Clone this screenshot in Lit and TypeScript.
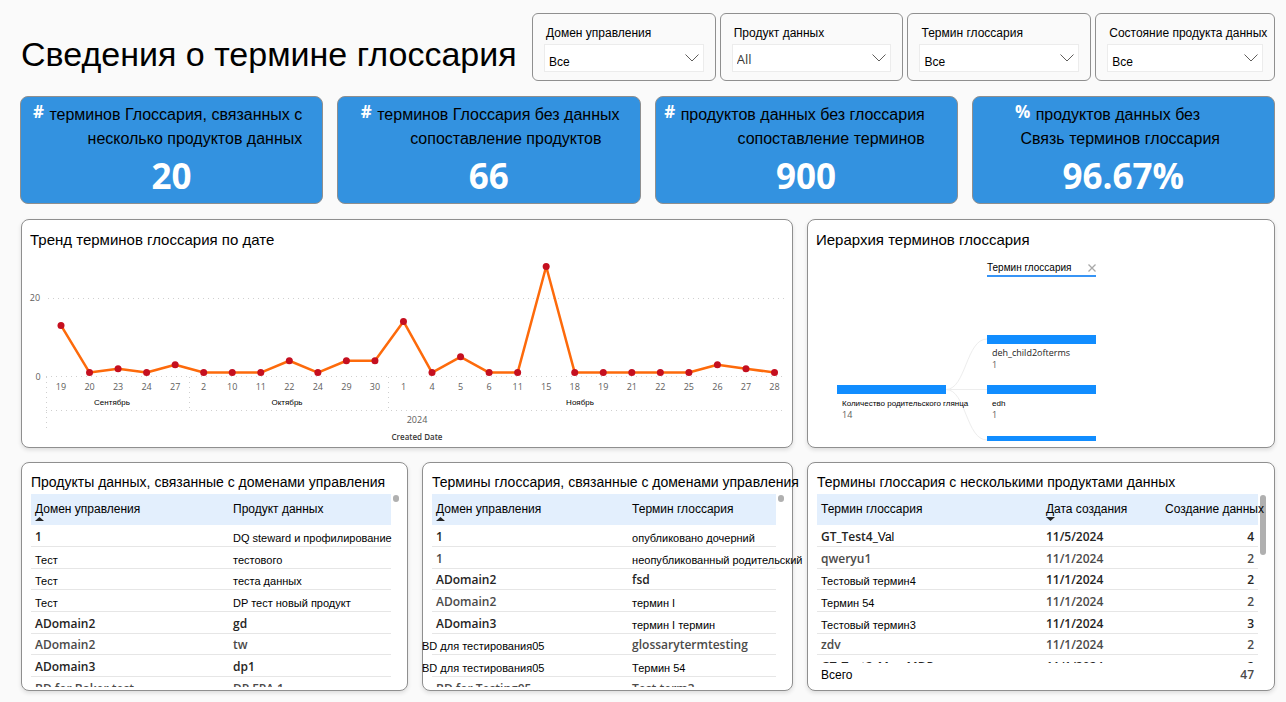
import { LitElement, html, svg, css, nothing } from "lit";
import { customElement, property } from "lit/decorators.js";
import { classMap } from "lit/directives/class-map.js";

interface Cell {
  text: string;
  ui?: boolean;
  soft?: boolean;
  bleed?: boolean;
  tail?: string;
}
interface Column {
  label: string;
  width: number;
  sort?: "asc" | "desc";
  end?: boolean;
}

const plain = (text: string): Cell => ({ text });
const strong = (text: string): Cell => ({ text, ui: true });
const soft = (text: string): Cell => ({ text, ui: true, soft: true });

const FILTERS = [
  { id: "domain", label: "Домен управления", value: "Все", latin: false },
  { id: "product", label: "Продукт данных", value: "All", latin: true },
  { id: "term", label: "Термин глоссария", value: "Все", latin: false },
  { id: "status", label: "Состояние продукта данных", value: "Все", latin: false },
];

const KPIS = [
  { sign: "#", lines: ["терминов Глоссария, связанных с", "несколько продуктов данных"], inset: ["s", "s"], value: "20" },
  { sign: "#", lines: ["терминов Глоссария без данных", "сопоставление продуктов"], inset: ["s", "l"], value: "66" },
  { sign: "#", lines: ["продуктов данных без глоссария", "сопоставление терминов"], inset: ["m", "m"], value: "900" },
  { sign: "%", lines: ["продуктов данных без", "Связь терминов глоссария"], inset: ["xxl", "xl"], value: "96.67%" },
];

const TREND: Array<[string, number]> = [
  ["19", 13], ["20", 1], ["23", 2], ["24", 1], ["27", 3],
  ["2", 1], ["10", 1], ["11", 1], ["22", 4], ["24", 1], ["29", 4], ["30", 4],
  ["1", 14], ["4", 1], ["5", 5], ["6", 1], ["11", 1], ["15", 28], ["18", 1],
  ["19", 1], ["21", 1], ["22", 1], ["25", 1], ["26", 3], ["27", 2], ["28", 1],
];

const DOMAIN_PRODUCTS: Cell[][] = [
  [strong("1"), plain("DQ steward и профилирование")],
  [plain("Тест"), plain("тестового")],
  [plain("Тест"), plain("теста данных")],
  [plain("Тест"), plain("DP тест новый продукт")],
  [strong("ADomain2"), strong("gd")],
  [soft("ADomain2"), soft("tw")],
  [strong("ADomain3"), strong("dp1")],
  [soft("BD for Baker test"), soft("DP FPA 1")],
];

const DOMAIN_TERMS: Cell[][] = [
  [strong("1"), plain("опубликовано дочерний")],
  [soft("1"), plain("неопубликованный родительский")],
  [strong("ADomain2"), strong("fsd")],
  [soft("ADomain2"), plain("термин I")],
  [strong("ADomain3"), plain("термин I термин")],
  [{ text: "BD для тестирования05", bleed: true }, soft("glossarytermtesting")],
  [{ text: "BD для тестирования05", bleed: true }, plain("Термин 54")],
  [soft("BD for Testing05"), soft("Test term3")],
];

const MULTI_TERMS: Cell[][] = [
  [{ text: "GT_Test4_", ui: true, tail: "Val" }, strong("11/5/2024"), strong("4")],
  [soft("qweryu1"), soft("11/1/2024"), soft("2")],
  [plain("Тестовый термин4"), strong("11/1/2024"), strong("2")],
  [plain("Термин 54"), soft("11/1/2024"), soft("2")],
  [plain("Тестовый термин3"), strong("11/1/2024"), strong("3")],
  [soft("zdv"), soft("11/1/2024"), soft("2")],
  [strong("GT_Test2_Man MDP"), strong("11/1/2024"), strong("2")],
];

@customElement("term-table")
class TermTable extends LitElement {
  @property({ attribute: false }) columns: Column[] = [];
  @property({ attribute: false }) rows: Cell[][] = [];
  @property({ attribute: false }) total?: [string, string];
  @property() caption = "";
  @property() thumb = "dot";

  static styles = css`
    :host {
      display: block;
      position: relative;
      font: 11px/16px "Liberation Sans", Arial, sans-serif;
      color: #000;
    }
    .view {
      height: 193px;
      padding-right: 16px;
      overflow-x: visible;
      overflow-y: clip;
    }
    .totalled {
      overflow: hidden;
    }
    table {
      width: 100%;
      table-layout: fixed;
      border-collapse: separate;
      border-spacing: 0;
    }
    th {
      height: 31px;
      padding: 0 4px;
      background: #e3effd;
      text-align: left;
      vertical-align: top;
      font-weight: 400;
    }
    th button {
      display: block;
      position: relative;
      margin: 0;
      padding: 7px 0 8px;
      border: 0;
      background: none;
      font: 12px/16px "Liberation Sans", Arial, sans-serif;
      color: #000;
      white-space: nowrap;
      cursor: pointer;
    }
    .arrow {
      position: absolute;
      left: 0;
      bottom: 4px;
      width: 9px;
      height: 4px;
      fill: #252423;
    }
    td {
      height: 22px;
      box-sizing: border-box;
      padding: 0 4px;
      border-bottom: 1px solid #e6e6e6;
      white-space: nowrap;
      vertical-align: bottom;
    }
    tbody tr:nth-child(3n) td {
      height: 21px;
    }
    .ui {
      font: 600 12px/18px "Open Sans", "Noto Sans", sans-serif;
      color: #252423;
    }
    .soft {
      color: #4b4a49;
    }
    .tail {
      font: 400 12px/16px "Liberation Sans", Arial, sans-serif;
      color: #000;
    }
    .end {
      text-align: right;
    }
    .bleed {
      display: block;
      margin-left: -14px;
    }
    tfoot td {
      position: sticky;
      bottom: 0;
      height: 24px;
      border: 0;
      background: #fff;
      font-size: 12px;
      vertical-align: middle;
    }
    .thumb {
      position: absolute;
      top: 1px;
      right: 8px;
      width: 6px;
      border-radius: 3px;
      background: #b0b0b0;
    }
    .dot {
      height: 7px;
    }
    .long {
      height: 60px;
    }
  `;

  private cell(c: Cell, end?: boolean) {
    const cls = { ui: !!c.ui, soft: !!c.soft, end: !!end };
    return html`<td class=${classMap(cls)}>${c.bleed
      ? html`<span class="bleed">${c.text}</span>`
      : c.text}${c.tail ? html`<span class="tail">${c.tail}</span>` : nothing}</td>`;
  }

  render() {
    return html`
      <div class="thumb ${this.thumb}"></div>
      <div class=${classMap({ view: true, totalled: !!this.total })}>
        <table aria-label=${this.caption}>
          <colgroup>
            ${this.columns.map((c) => html`<col style="width:${c.width}%" />`)}
          </colgroup>
          <thead>
            <tr>
              ${this.columns.map(
                (c) => html`<th scope="col">
                  <button type="button">${c.label}${c.sort
                    ? html`<svg class="arrow" viewBox="0 0 9 4" aria-hidden="true">
                        <path d=${c.sort === "asc" ? "M0 4 4.5 0 9 4Z" : "M0 0 4.5 4 9 0Z"}></path>
                      </svg>`
                    : nothing}</button>
                </th>`
              )}
            </tr>
          </thead>
          <tbody>
            ${this.rows.map(
              (r) => html`<tr>${r.map((c, i) => this.cell(c, this.columns[i].end))}</tr>`
            )}
          </tbody>
          ${this.total
            ? html`<tfoot>
                <tr>
                  <td colspan="2">${this.total[0]}</td>
                  <td class="ui soft end">${this.total[1]}</td>
                </tr>
              </tfoot>`
            : nothing}
        </table>
      </div>
    `;
  }
}

@customElement("trend-chart")
class TrendChart extends LitElement {
  static styles = css`
    :host {
      display: block;
    }
    svg {
      display: block;
      width: 100%;
      height: auto;
    }
    .grid {
      stroke: #cfcfcf;
      stroke-width: 1;
      stroke-dasharray: 1 4;
      fill: none;
    }
    .line {
      stroke: #fd6a0b;
      stroke-width: 2.5;
      stroke-linejoin: round;
      fill: none;
    }
    .dot {
      fill: #c50f1f;
    }
    text {
      font: 9px "Open Sans", "Noto Sans", sans-serif;
      fill: #605e5c;
      text-anchor: middle;
    }
    .month {
      font: 8px "Liberation Sans", Arial, sans-serif;
      fill: #000;
    }
    .axis {
      font-size: 8px;
      font-weight: 600;
      fill: #3b3a39;
    }
  `;

  render() {
    const x = (i: number) => 40 + i * 28.54;
    const y = (v: number) => 126.5 - v * 3.93;
    const path = TREND.map(([, v], i) => `${x(i)},${y(v)}`).join(" ");
    return html`
      <svg viewBox="1 0 770 197" role="img" aria-label="Тренд терминов глоссария по дате">
        <path class="grid" d="M27 48.5H763M25 126.5H763M25 160.5H763M25.5 127V180M168.5 127V160M367.5 127V160"></path>
        <text x="14" y="51">20</text>
        <text x="17" y="130">0</text>
        <polyline class="line" points=${path}></polyline>
        ${TREND.map(
          ([d, v], i) => svg`
            <circle class="dot" cx=${x(i)} cy=${y(v)} r="3.5"></circle>
            <text x=${x(i)} y="140">${d}</text>`
        )}
        <text class="month" x="91" y="155">Сентябрь</text>
        <text class="month" x="266" y="155">Октябрь</text>
        <text class="month" x="559" y="155">Ноябрь</text>
        <text x="396" y="173">2024</text>
        <text class="axis" x="396" y="190">Created Date</text>
      </svg>
    `;
  }
}

@customElement("term-tree")
class TermTree extends LitElement {
  static styles = css`
    :host {
      display: block;
    }
    .crumb {
      display: flex;
      justify-content: space-between;
      align-items: center;
      width: 109px;
      height: 16px;
      box-sizing: border-box;
      margin: 11px 0 0 179px;
      border-bottom: 2px solid #3794f5;
      font: 10px/14px "Liberation Sans", Arial, sans-serif;
      color: #000;
      white-space: nowrap;
    }
    button {
      display: flex;
      margin: 0;
      padding: 0;
      border: 0;
      background: none;
      cursor: pointer;
    }
    .close {
      width: 8px;
      height: 8px;
      stroke: #a8a8a8;
      stroke-width: 1.3;
    }
    .tree {
      display: block;
      width: 100%;
      height: 166px;
    }
    .link {
      fill: none;
      stroke: #ededed;
    }
    .bar {
      fill: #118dff;
    }
    text {
      font: 9px "Open Sans", "Noto Sans", sans-serif;
      fill: #252423;
    }
    .count {
      fill: #605e5c;
    }
    .small {
      font: 8px "Liberation Sans", Arial, sans-serif;
      fill: #000;
    }
  `;

  render() {
    return html`
      <div class="crumb">
        <span>Термин глоссария</span>
        <button type="button" aria-label="Удалить уровень">
          <svg class="close" viewBox="0 0 8 8"><path d="M.5.5l7 7M7.5.5l-7 7"></path></svg>
        </button>
      </div>
      <svg class="tree" viewBox="0 0 466 166" preserveAspectRatio="xMinYMin meet" role="img" aria-label="Иерархия терминов глоссария">
        <path class="link" d="M138 112.5C158 112.5 158 62 179 62M138 112.5H179M138 112.5C158 112.5 158 163 179 163"></path>
        <rect class="bar" x="29" y="108" width="109" height="9"></rect>
        <rect class="bar" x="179" y="58" width="109" height="9"></rect>
        <rect class="bar" x="179" y="108" width="109" height="9"></rect>
        <rect class="bar" x="179" y="159" width="109" height="5"></rect>
        <text class="small" x="34" y="129">Количество родительского глянца</text>
        <text class="count" x="34" y="141">14</text>
        <text x="184" y="79">deh_child2ofterms</text>
        <text class="count" x="184" y="91">1</text>
        <text class="small" x="184" y="129">edh</text>
        <text class="count" x="184" y="141">1</text>
      </svg>
    `;
  }
}

@customElement("app-root")
class AppRoot extends LitElement {
  static styles = css`
    :host {
      display: block;
      min-height: 100vh;
      box-sizing: border-box;
      padding: 13px 11px 10px 20px;
      background: #fafafa;
      font-family: "Liberation Sans", Arial, sans-serif;
      color: #000;
    }
    header {
      display: grid;
      grid-template-columns: minmax(0, 512fr) minmax(0, 743fr);
    }
    h1 {
      margin: 0;
      padding: 21px 0 0 1px;
      font-size: 34px;
      line-height: 40px;
      font-weight: 400;
      white-space: nowrap;
    }
    .filters {
      display: grid;
      grid-template-columns: minmax(0, 46fr) minmax(0, 46fr) minmax(0, 46fr) minmax(0, 45fr);
      gap: 4px;
    }
    .filter {
      box-sizing: border-box;
      height: 68px;
      padding: 11px 11px 9px;
      border: 1px solid #8f8f8f;
      border-radius: 6px;
    }
    .filter label {
      display: block;
      padding: 0 2px;
      margin-bottom: 3px;
      font-size: 12px;
      line-height: 16px;
      white-space: nowrap;
    }
    .pick {
      display: flex;
      position: relative;
    }
    select {
      flex: 1;
      min-width: 0;
      height: 28px;
      padding: 8px 24px 0 4px;
      border: 1px solid #ececec;
      border-radius: 0;
      background: #fff;
      appearance: none;
      font: 12px/16px "Liberation Sans", Arial, sans-serif;
      color: #000;
    }
    select.latin {
      padding-top: 2px;
      font: 13px/16px "Open Sans", "Noto Sans", sans-serif;
      color: #3b3a39;
    }
    .chevron {
      position: absolute;
      right: 5px;
      top: 10px;
      width: 14px;
      height: 8px;
      fill: none;
      stroke: #605e5c;
      pointer-events: none;
    }
    .kpis {
      display: grid;
      grid-template-columns: repeat(4, minmax(0, 1fr));
      gap: 14px;
      margin-top: 15px;
    }
    .kpi {
      box-sizing: border-box;
      height: 108px;
      padding: 6px 0;
      border: 1px solid #8f8f8f;
      border-radius: 8px;
      background: #3392e0;
    }
    .kpi p {
      margin: 0;
      font-size: 16px;
      line-height: 24px;
      text-align: right;
      white-space: nowrap;
    }
    .sign {
      margin-right: 1px;
      font: 700 17px/1 "Open Sans", "Noto Sans", sans-serif;
      vertical-align: 2px;
      color: #fff;
    }
    .kpi .s { padding-right: 20px; }
    .kpi .m { padding-right: 32px; }
    .kpi .l { padding-right: 38px; }
    .kpi .xl { padding-right: 54px; }
    .kpi .xxl { padding-right: 74px; }
    .value {
      display: block;
      font: 700 35px/50px "Open Sans", "Noto Sans", sans-serif;
      text-align: center;
      color: #fff;
    }
    .panels {
      display: grid;
      grid-template-columns: minmax(0, 387fr) minmax(0, 371fr) minmax(0, 468fr);
      gap: 14px;
      margin-top: 15px;
      padding-left: 1px;
    }
    .panel {
      box-sizing: border-box;
      min-height: 229px;
      border: 1px solid #8f8f8f;
      border-radius: 8px;
      background: #fff;
      box-shadow: 0 2px 4px rgba(0, 0, 0, 0.12);
    }
    .wide {
      grid-column: span 2;
    }
    h2 {
      margin: 0;
      padding: 10px 8px 0;
      font-size: 15px;
      line-height: 20px;
      font-weight: 400;
      white-space: nowrap;
    }
    .listing {
      padding-left: 9px;
    }
    .listing h2 {
      padding: 9px 0 2px;
      font-size: 14px;
    }
  `;

  render() {
    return html`
      <header>
        <h1>Сведения о термине глоссария</h1>
        <div class="filters">
          ${FILTERS.map(
            (f) => html`<div class="filter">
              <label for=${f.id}>${f.label}</label>
              <div class="pick">
                <select id=${f.id} class=${classMap({ latin: f.latin })}><option>${f.value}</option></select>
                <svg class="chevron" viewBox="0 0 14 8" aria-hidden="true"><path d="M.5.5 7 7 13.500.5"></path></svg>
              </div>
            </div>`
          )}
        </div>
      </header>
      <section class="kpis">
        ${KPIS.map(
          (k) => html`<article class="kpi">
            <p class=${k.inset[0]}><span class="sign">${k.sign}</span> ${k.lines[0]}</p>
            <p class=${k.inset[1]}>${k.lines[1]}</p>
            <strong class="value">${k.value}</strong>
          </article>`
        )}
      </section>
      <main class="panels">
        <section class="panel wide">
          <h2>Тренд терминов глоссария по дате</h2>
          <trend-chart></trend-chart>
        </section>
        <section class="panel">
          <h2>Иерархия терминов глоссария</h2>
          <term-tree></term-tree>
        </section>
        <section class="panel listing">
          <h2>Продукты данных, связанные с доменами управления</h2>
          <term-table
            caption="Продукты данных, связанные с доменами управления"
            .columns=${[{ label: "Домен управления", width: 55, sort: "asc" }, { label: "Продукт данных", width: 45 }]}
            .rows=${DOMAIN_PRODUCTS}
          ></term-table>
        </section>
        <section class="panel listing">
          <h2>Термины глоссария, связанные с доменами управления</h2>
          <term-table
            caption="Термины глоссария, связанные с доменами управления"
            .columns=${[{ label: "Домен управления", width: 57, sort: "asc" }, { label: "Термин глоссария", width: 43 }]}
            .rows=${DOMAIN_TERMS}
          ></term-table>
        </section>
        <section class="panel listing">
          <h2>Термины глоссария с несколькими продуктами данных</h2>
          <term-table
            caption="Термины глоссария с несколькими продуктами данных"
            thumb="long"
            .columns=${[
              { label: "Термин глоссария", width: 51 },
              { label: "Дата создания", width: 27, sort: "desc" },
              { label: "Создание данных", width: 22, end: true },
            ]}
            .rows=${MULTI_TERMS}
            .total=${["Всего", "47"]}
          ></term-table>
        </section>
      </main>
    `;
  }
}
